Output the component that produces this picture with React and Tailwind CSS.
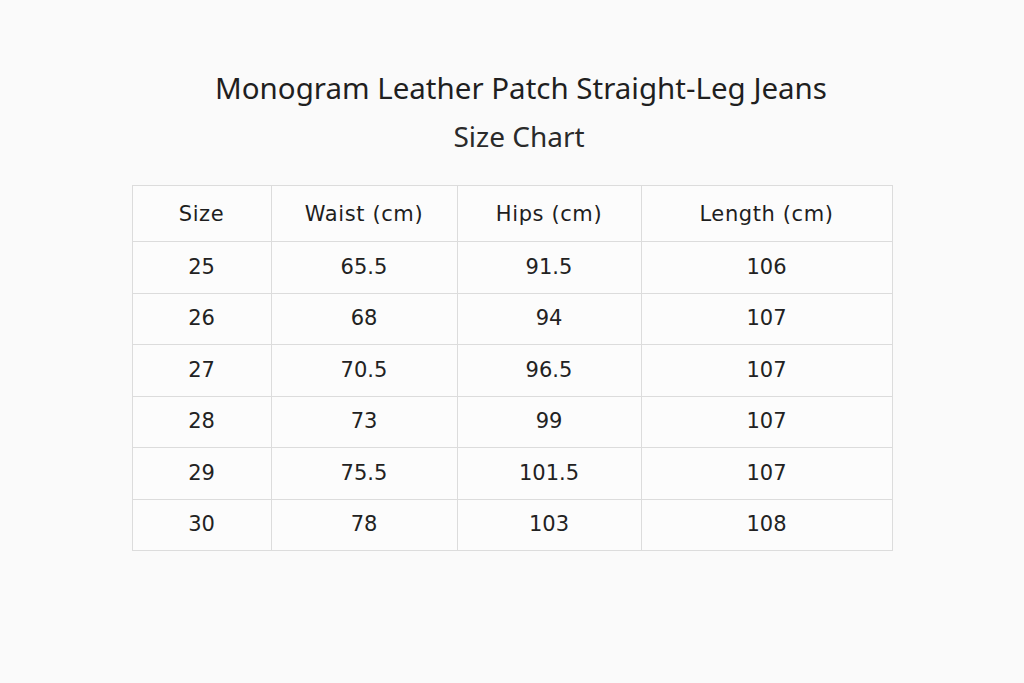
import React from 'react';

const headers = ['Size', 'Waist (cm)', 'Hips (cm)', 'Length (cm)'];

const rows = [
    ['25', '65.5', '91.5', '106'],
    ['26', '68', '94', '107'],
    ['27', '70.5', '96.5', '107'],
    ['28', '73', '99', '107'],
    ['29', '75.5', '101.5', '107'],
    ['30', '78', '103', '108'],
];

const colWidths = ['w-[139px]', 'w-[186px]', 'w-[184px]', 'w-[251px]'];

function App() {
    return (
        <div className="w-full h-[683px] bg-[#fafafa] flex flex-col items-center font-['DejaVu_Sans',sans-serif] text-[#222]">
            {/* Title */}
            <h1 className="mt-[68px] ml-[18px] text-[29.5px] leading-[40px] font-['Noto_Sans',sans-serif] text-[#1f1f1f]">
                Monogram Leather Patch Straight-Leg Jeans
            </h1>
            <h2 className="mt-[9px] ml-[14px] text-[28px] leading-[38px] font-['Noto_Sans',sans-serif] text-[#2a2a2a]">
                Size Chart
            </h2>

            {/* Table */}
            <table className="mt-[30px] border-collapse border border-[#dcdcdc] bg-[#fcfcfc]">
                <thead>
                    <tr className="h-[56px]">
                        {headers.map((h, i) => (
                            <th key={h} className={`${colWidths[i]} border border-[#dcdcdc] font-normal text-[21px] tracking-[0.6px] text-[#1e1e1e] pt-[2px]`}>
                                {h}
                            </th>
                        ))}
                    </tr>
                </thead>
                <tbody>
                    {rows.map((r) => (
                        <tr key={r[0]} className="h-[51.5px]">
                            {r.map((c, i) => (
                                <td key={i} className={`${colWidths[i]} border border-[#dcdcdc] text-center text-[21px] text-[#222]`}>
                                    {c}
                                </td>
                            ))}
                        </tr>
                    ))}
                </tbody>
            </table>
        </div>
    );
}

export default App;
